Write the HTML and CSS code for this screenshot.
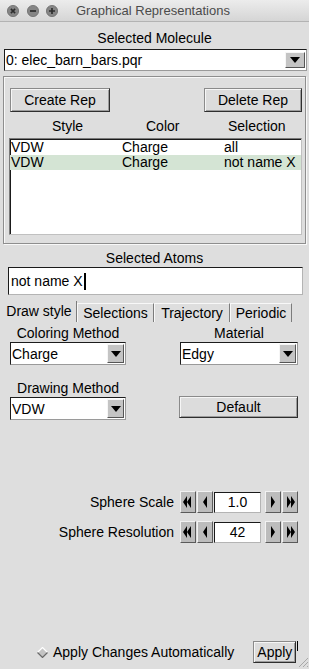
FILE: index.html
```html
<!DOCTYPE html>
<html lang="en">
<head>
  <meta charset="UTF-8" />
  <title>Graphical Representations</title>
  <link rel="stylesheet" href="styles.css">
</head>
<body>
  <div class="titlebar">
    <span class="light">
      <svg width="12" height="12" viewBox="0 0 12 12"><circle cx="6" cy="6" r="5.6" fill="#858585" stroke="#6c6c6c" stroke-width="0.8"/><path d="M3.9 3.9 L8.1 8.1 M8.1 3.9 L3.9 8.1" stroke="#2e2e2e" stroke-width="1.6"/></svg>
    </span>
    <span class="light">
      <svg width="12" height="12" viewBox="0 0 12 12"><circle cx="6" cy="6" r="5.6" fill="#858585" stroke="#6c6c6c" stroke-width="0.8"/><path d="M3 6 H9" stroke="#2e2e2e" stroke-width="1.7"/></svg>
    </span>
    <span class="light">
      <svg width="12" height="12" viewBox="0 0 12 12"><circle cx="6" cy="6" r="5.6" fill="#858585" stroke="#6c6c6c" stroke-width="0.8"/><path d="M3 6 H9 M6 3 V9" stroke="#2e2e2e" stroke-width="1.7"/></svg>
    </span>
    <span class="title">Graphical Representations</span>
  </div>

  <div class="caption mol-cap">Selected Molecule</div>
  <div class="menubtn menubtn-wide">
    <span class="menutext">0: elec_barn_bars.pqr</span>
    <span class="arrow arrow-wide"><svg width="10" height="6" viewBox="0 0 10 6"><polygon points="0,0 10,0 5,6" fill="#000"/></svg></span>
  </div>

  <div class="frame">
    <div class="btnrow">
      <button class="btn create-btn">Create Rep</button>
      <button class="btn delete-btn">Delete Rep</button>
    </div>
    <div class="listhead">
      <span class="col-style">Style</span><span class="col-color">Color</span><span>Selection</span>
    </div>
    <div class="listbox">
      <div class="row"><span>VDW</span><span>Charge</span><span>all</span></div>
      <div class="row row-sel"><span>VDW</span><span>Charge</span><span>not name X</span></div>
    </div>
  </div>

  <div class="caption atoms-cap">Selected Atoms</div>
  <div class="entry">not name X<span class="caret"></span></div>

  <div class="tabs">
    <span class="tab tab-active">Draw style</span>
    <span class="tab tab-sel">Selections</span>
    <span class="tab tab-traj">Trajectory</span>
    <span class="tab tab-per">Periodic</span>
  </div>

  <div class="pane">
    <div class="cell">
      <div class="caption">Coloring Method</div>
      <div class="menubtn menubtn-small">
        <span class="menutext">Charge</span>
        <span class="arrow arrow-small"><svg width="10" height="6" viewBox="0 0 10 6"><polygon points="0,0 10,0 5,6" fill="#000"/></svg></span>
      </div>
    </div>
    <div class="cell">
      <div class="caption">Material</div>
      <div class="menubtn menubtn-small">
        <span class="menutext">Edgy</span>
        <span class="arrow arrow-small"><svg width="10" height="6" viewBox="0 0 10 6"><polygon points="0,0 10,0 5,6" fill="#000"/></svg></span>
      </div>
    </div>
    <div class="cell cell-second">
      <div class="caption">Drawing Method</div>
      <div class="menubtn menubtn-small">
        <span class="menutext">VDW</span>
        <span class="arrow arrow-small"><svg width="10" height="6" viewBox="0 0 10 6"><polygon points="0,0 10,0 5,6" fill="#000"/></svg></span>
      </div>
    </div>
    <div class="cell cell-second cell-default">
      <button class="btn default-btn">Default</button>
    </div>
  </div>

  <div class="spinners">
    <div class="spin-row">
      <span class="spin-label">Sphere Scale</span>
      <span class="sbtn"><svg width="10" height="12" viewBox="0 0 10 12"><polygon points="4,0 4,12 0,6" fill="#000"/><polygon points="8,0 8,12 4,6" fill="#000"/></svg></span>
      <span class="sbtn"><svg width="6" height="12" viewBox="0 0 6 12"><polygon points="5,0 5,12 1,6" fill="#000"/></svg></span>
      <span class="sentry">1.0</span>
      <span class="sbtn"><svg width="6" height="12" viewBox="0 0 6 12"><polygon points="1,0 1,12 5,6" fill="#000"/></svg></span>
      <span class="sbtn"><svg width="10" height="12" viewBox="0 0 10 12"><polygon points="2,0 2,12 6,6" fill="#000"/><polygon points="6,0 6,12 10,6" fill="#000"/></svg></span>
    </div>
    <div class="spin-row">
      <span class="spin-label">Sphere Resolution</span>
      <span class="sbtn"><svg width="10" height="12" viewBox="0 0 10 12"><polygon points="4,0 4,12 0,6" fill="#000"/><polygon points="8,0 8,12 4,6" fill="#000"/></svg></span>
      <span class="sbtn"><svg width="6" height="12" viewBox="0 0 6 12"><polygon points="5,0 5,12 1,6" fill="#000"/></svg></span>
      <span class="sentry">42</span>
      <span class="sbtn"><svg width="6" height="12" viewBox="0 0 6 12"><polygon points="1,0 1,12 5,6" fill="#000"/></svg></span>
      <span class="sbtn"><svg width="10" height="12" viewBox="0 0 10 12"><polygon points="2,0 2,12 6,6" fill="#000"/><polygon points="6,0 6,12 10,6" fill="#000"/></svg></span>
    </div>
  </div>

  <div class="spacer"></div>

  <div class="bottom">
    <svg class="diamond" width="11" height="11" viewBox="0 0 11 11"><polygon points="5.5,0.5 10.5,5.5 5.5,10.5 0.5,5.5" fill="#c4c4c4"/><polyline points="0.5,5.5 5.5,0.5 10.5,5.5" fill="none" stroke="#ffffff" stroke-width="1.2"/><polyline points="0.5,5.5 5.5,10.5 10.5,5.5" fill="none" stroke="#6a6a6a" stroke-width="1.2"/></svg>
    <span class="auto-label">Apply Changes Automatically</span>
    <button class="btn apply-btn">Apply</button>
    <span class="focus-mark"></span>
  </div>

  <svg class="grip" width="12" height="12" viewBox="0 0 12 12"><path d="M11 2 L2 11 M11 6 L6 11 M11 10 L10 11" stroke="#a8a8a8" stroke-width="1"/></svg>
</body>
</html>
```

FILE: styles.css
```css
* { box-sizing: border-box; margin: 0; padding: 0; }
body {
  width: 309px; height: 669px;
  background: #dedede;
  font-family: "Liberation Sans", Arial, sans-serif;
  font-size: 14px; color: #000;
  display: flex; flex-direction: column;
  overflow: hidden; position: relative;
}

/* window title */
.titlebar {
  height: 22px;
  background: linear-gradient(#ececec, #d5d5d5);
  border-bottom: 1px solid #b3b3b3;
  display: flex; align-items: center;
  padding-left: 7px;
}
.light { width: 12px; height: 12px; margin-right: 8px; display: flex; }
.light:nth-child(2) { margin-right: 7px; }
.title {
  margin-left: 10px;
  font-size: 13px; color: #4b4b4b;
}

.caption { text-align: center; line-height: 16px; height: 16px; }
.mol-cap { margin-top: 8px; }
.atoms-cap { margin-top: 6px; }

/* option menus */
.menubtn {
  position: relative;
  background: #fff;
  border: 1px solid #1c1c1c;
  border-right-color: #9a9a9a;
  border-bottom-color: #9a9a9a;
  display: flex; align-items: center;
}
.menutext { padding-left: 1px; line-height: 16px; }
.menubtn-wide { margin: 3px 2px 0 4px; height: 22px; }
.menubtn-small { margin-top: 1px; height: 23px; }
.arrow {
  margin-left: auto; margin-right: 1px;
  background: #c4c4c4;
  border: 1px solid #555;
  border-top-color: #f6f6f6; border-left-color: #f6f6f6;
  display: flex; align-items: center; justify-content: center;
}
.arrow-wide { width: 20px; height: 16px; }
.arrow-small { width: 17px; height: 19px; }

/* rep frame */
.frame {
  margin: 5px 3px 0;
  border: 1px solid #8e8e8e;
  box-shadow: inset 1px 1px 0 #f8f8f8, 1px 1px 0 #f8f8f8;
  padding: 11px 3px 8px 6px;
}
.btnrow { display: flex; justify-content: space-between; }
.btn {
  font: inherit; color: #000;
  height: 24px;
  background: #dcdcdc;
  border: 1px solid #8a8a8a;
  border-right-color: #2e2e2e; border-bottom-color: #2e2e2e;
  box-shadow: inset 1px 1px 0 #f6f6f6, inset -1px -1px 0 #9c9c9c;
}
.create-btn { width: 100px; }
.delete-btn { width: 98px; }
.listhead {
  margin-top: 6px; height: 16px; line-height: 16px;
  padding-left: 42px; display: flex;
}
.col-style { width: 94px; }
.col-color { width: 82px; }
.listbox {
  margin: 4px 0 0 -1px;
  width: 293px; height: 97px;
  background: #fff;
  border: 1px solid #c0c0c0;
  border-top-color: #7a7a7a; border-left-color: #7a7a7a;
  box-shadow: inset 1px 1px 0 #1a1a1a;
  padding-top: 1px;
}
.row {
  height: 15px; line-height: 15px;
  display: grid; grid-template-columns: 111px 102px 1fr;
  padding-left: 1px;
}
.row-sel { background: #d4e4d4; }

/* atom selection entry */
.entry {
  margin: 1px 6px 0 8px; height: 28px;
  background: #fff;
  border: 1px solid #b4b4b4;
  border-top-color: #1a1a1a; border-left-color: #1a1a1a;
  padding-left: 2px;
  display: flex; align-items: center;
}
.caret { width: 2px; height: 17px; background: #000; margin-left: 1px; }

/* notebook tabs */
.tabs { margin: 6px 0 0 2px; height: 21px; display: flex; align-items: flex-end; }
.tab {
  height: 19px; line-height: 18px;
  text-align: center;
  border-left: 1px solid #f8f8f8;
  border-top: 1px solid #f8f8f8;
  border-right: 1px solid #7c7c7c;
}
.tab-active { height: 21px; line-height: 21px; width: 75px; border-left: none; border-top: none; }
.tab-sel { width: 77px; }
.tab-traj { width: 76px; }
.tab-per { width: 62px; }

.pane {
  margin-top: 3px; padding-left: 10px;
  display: grid; grid-template-columns: 116px 118px; column-gap: 54px;
}
.cell-second { margin-top: 15px; }
.cell-default { display: flex; align-items: flex-end; padding-bottom: 2px; }
.default-btn { width: 119px; height: 22px; margin-left: -1px; }

/* spinners */
.spinners { margin-top: 71px; }
.spin-row {
  height: 22px; margin-bottom: 8px;
  display: flex; align-items: center; justify-content: flex-end;
  padding-right: 11px;
}
.spin-label { margin-right: 6px; }
.sbtn {
  width: 16px; height: 22px;
  background: #bcbcbc;
  border: 1px solid #5a5a5a;
  border-top-color: #f2f2f2; border-left-color: #f2f2f2;
  display: flex; align-items: center; justify-content: center;
}
.sbtn + .sbtn { margin-left: 1px; }
.sentry {
  width: 47px; height: 21px; margin: 0 4px 0 1px;
  background: #fff;
  border: 1px solid #b4b4b4;
  border-top-color: #1a1a1a; border-left-color: #1a1a1a;
  text-align: center; line-height: 19px;
}

.spacer { flex: 1; }

.bottom {
  margin-bottom: 6px; padding-left: 37px;
  display: flex; align-items: center;
}
.diamond { margin-right: 5px; }
.apply-btn { width: 43px; height: 22px; margin-left: 19px; }
.focus-mark { width: 1px; height: 10px; background: #000; align-self: flex-start; margin-left: 1px; }
.grip { position: absolute; right: 0; bottom: 1px; }
```
